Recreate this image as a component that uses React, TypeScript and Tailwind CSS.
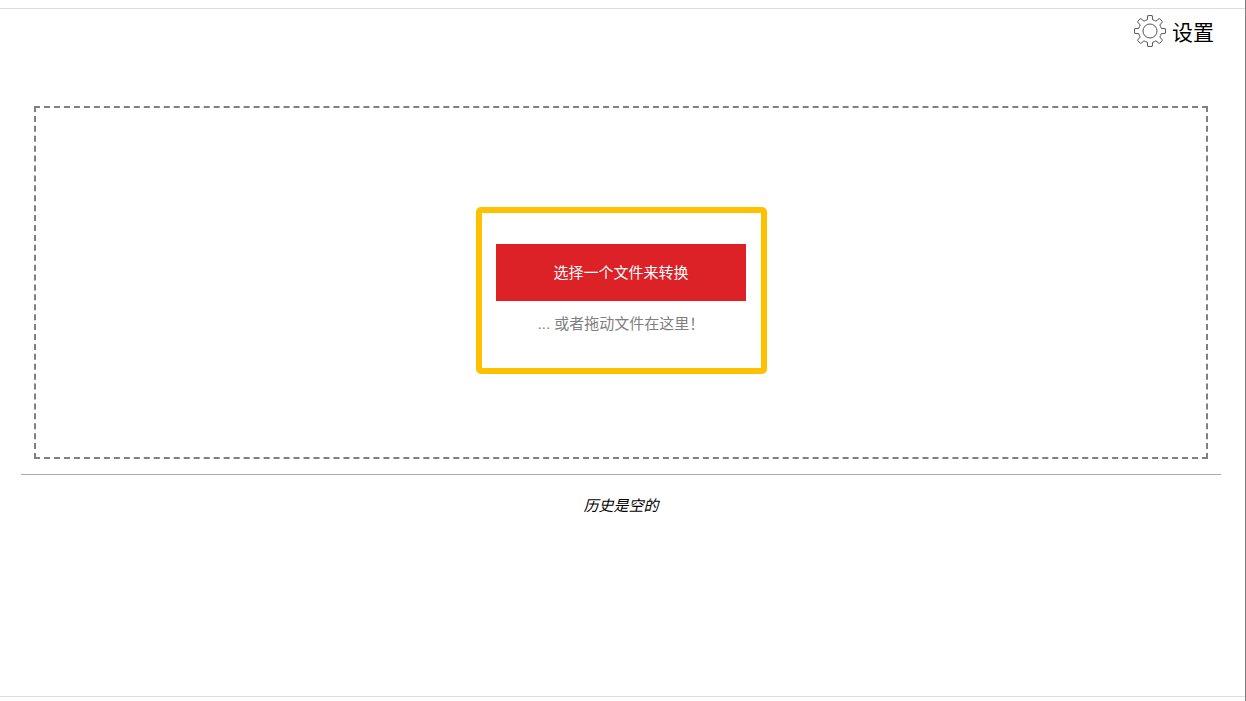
const font = { fontFamily: '"Liberation Sans", "Noto Sans CJK SC", sans-serif' };

function gearPath() {
  const cx = 16;
  const cy = 16;
  const teeth = 8;
  const outer = 15.5;
  const inner = 11.5;
  const pts: string[] = [];
  for (let i = 0; i < teeth; i++) {
    const a = (i * 2 * Math.PI) / teeth - Math.PI / 2;
    const step = (2 * Math.PI) / teeth;
    const p = (r: number, t: number) =>
      `${(cx + r * Math.cos(a + t)).toFixed(2)} ${(cy + r * Math.sin(a + t)).toFixed(2)}`;
    pts.push(`${i === 0 ? "M" : "L"}${p(inner, -step * 0.3)}`);
    pts.push(`L${p(outer, -step * 0.19)}`);
    pts.push(`Q${p(outer + 0.4, 0)} ${p(outer, step * 0.19)}`);
    pts.push(`L${p(inner, step * 0.3)}`);
    pts.push(`Q${p(inner + 0.2, step * 0.5)} ${p(inner, step * 0.7)}`);
  }
  return pts.join(" ") + "Z";
}

function Gear() {
  return (
    <svg width="32" height="32" viewBox="0 0 32 32" fill="none" stroke="#555" strokeWidth="1" className="mb-[6px]">
      <path d={gearPath()} strokeLinejoin="round" />
      <circle cx="16" cy="16" r="7" />
    </svg>
  );
}

export default function App() {
  return (
    <div className="w-[1246px] h-[701px] bg-white overflow-hidden border-r border-[#808080] flex flex-col" style={font}>
      <div className="h-[9px] shrink-0 border-b border-[#dddddd]" />
      <div className="h-[38px] mt-[6px] shrink-0 flex items-center justify-end pr-[31px] gap-[6px]">
        <Gear />
        <span className="text-[21px] leading-[32px] text-black mb-[2px]">设置</span>
      </div>
      <div className="flex-1 flex flex-col">
        <div className="mt-[53px] mx-[34px] mr-[37px] h-[353px] border-2 border-dashed border-[#808080] flex items-center justify-center">
          <div className="w-[291px] h-[167px] mt-[16px] border-[6px] border-[#ffc000] rounded-[5px] flex flex-col items-center pt-[31px]">
            <button className="w-[250px] h-[57px] bg-[#dc2127] text-white text-[15px] pt-[2px] flex items-center justify-center">
              选择一个文件来转换
            </button>
            <p className="mt-[13px] text-[15px] leading-[20px] text-[#808080]">... 或者拖动文件在这里！</p>
          </div>
        </div>
        <div className="mt-[15px] ml-[21px] mr-[24px] h-px bg-[#aaaaaa]" />
        <p className="mt-[21px] w-[1243px] pr-[1px] text-center italic text-[15px] leading-[20px] text-black">历史是空的</p>
      </div>
      <div className="h-[5px] shrink-0 border-t border-[#dddddd]" />
    </div>
  );
}
